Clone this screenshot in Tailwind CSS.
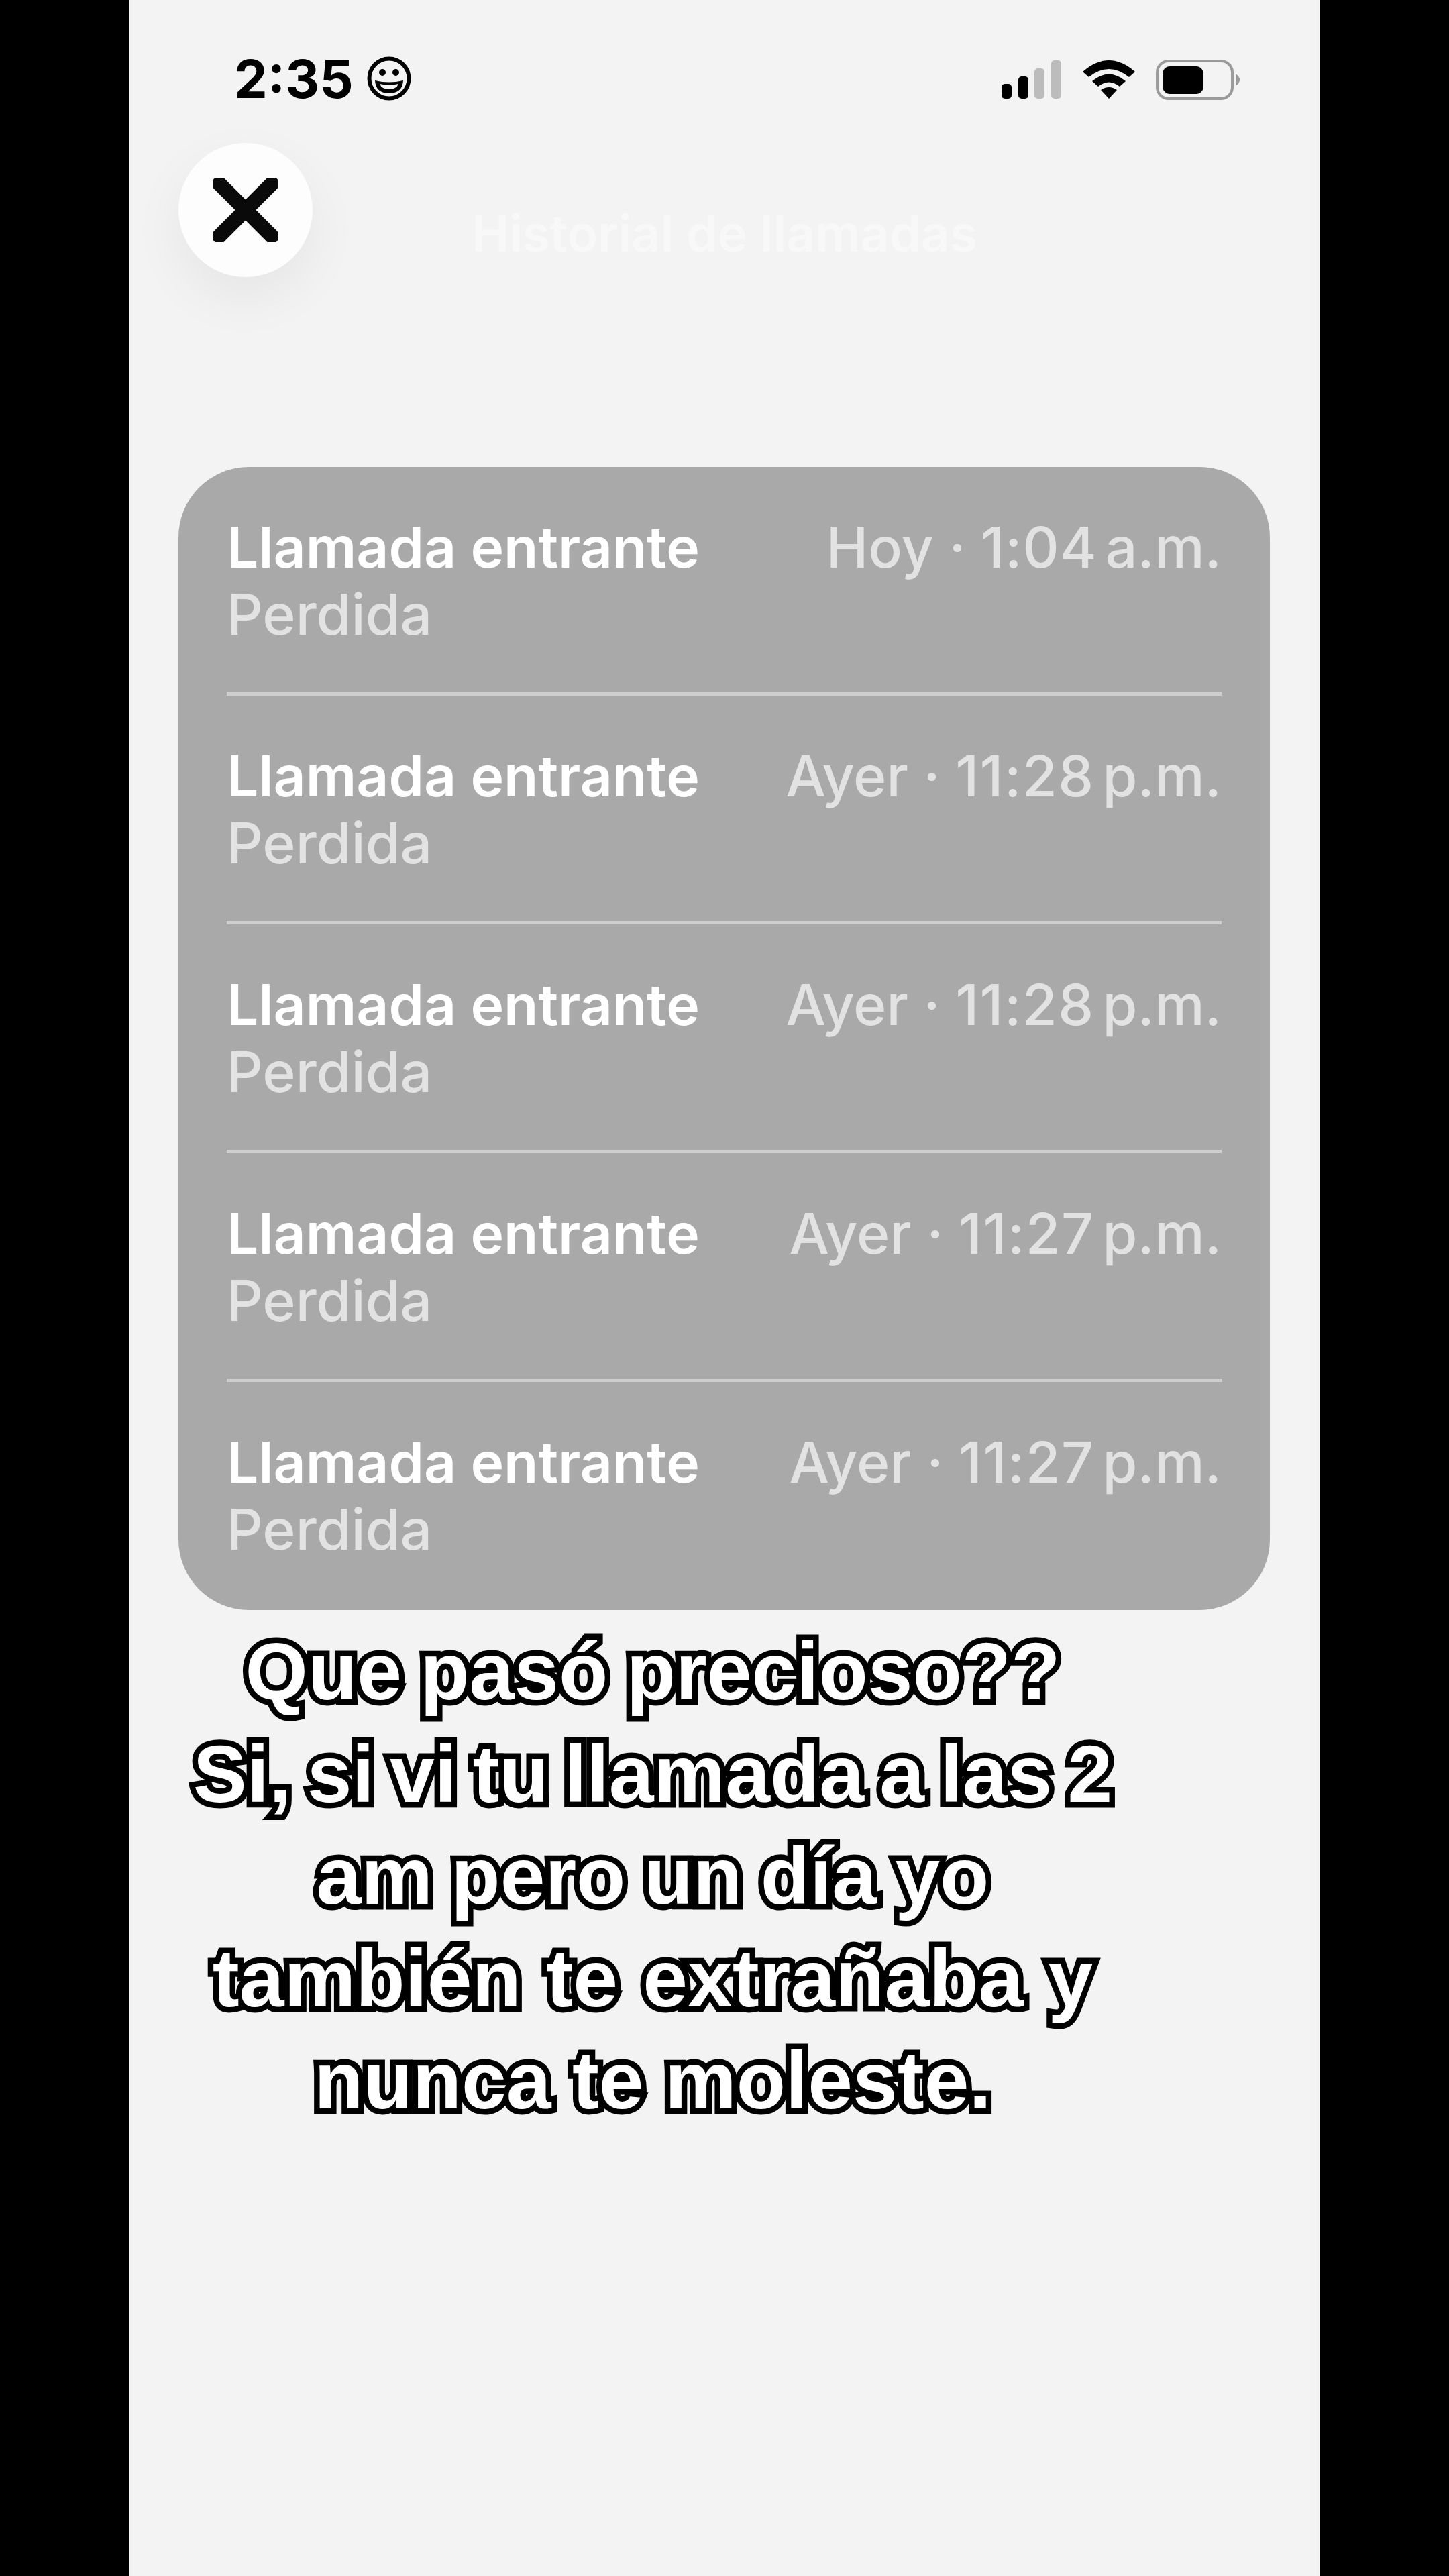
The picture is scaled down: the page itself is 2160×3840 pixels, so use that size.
<!DOCTYPE html>
<html lang="es">
<head>
    <meta charset="UTF-8">
    <meta content="width=device-width, initial-scale=1.0" name="viewport">
    <title>Historial de llamadas</title>
    <script src="https://cdn.jsdelivr.net/npm/@tailwindcss/browser@4"></script>
</head>
<body class="bg-black">
    <div class="mx-auto w-[1774px] h-[3840px] bg-[#f3f3f3] font-['Inter','Liberation_Sans',sans-serif] overflow-hidden">
        <!-- status bar -->
        <div class="h-[213px] pl-[156px] pr-[118px] pt-[77px] flex justify-between items-start">
            <div class="flex items-center gap-[20px] h-[80px]">
                <span class="text-[79px] leading-none font-bold text-black">2:35</span>
                <svg width="66" height="66" viewBox="0 0 66 66">
                    <circle cx="33" cy="33" r="29.5" fill="none" stroke="#000" stroke-width="6"/>
                    <circle cx="23" cy="24" r="5" fill="#000"/>
                    <circle cx="43" cy="24" r="5" fill="#000"/>
                    <path d="M12 36 Q33 41 54 36 Q53 55 33 55 Q13 55 12 36Z" fill="#000"/>
                    <path d="M19 41 Q33 44 47 41 Q44 49 33 49 Q22 49 19 41Z" fill="#f3f3f3"/>
                </svg>
            </div>
            <div class="flex items-center gap-[31px] h-[64px] pt-[20px]">
                <svg width="90" height="58" viewBox="0 0 90 58">
                    <rect x="0" y="35" width="15" height="22" rx="5" fill="#000"/>
                    <rect x="25" y="24" width="15" height="33" rx="5" fill="#000"/>
                    <rect x="49" y="12" width="15" height="45" rx="5" fill="#bcbcbc"/>
                    <rect x="74" y="0" width="15" height="57" rx="5" fill="#bcbcbc"/>
                </svg>
                <svg width="78" height="58" viewBox="0 0 78 58">
                    <path d="M0 17 Q39 -17 78 17 L69 25 Q39 1 9 25Z" fill="#000"/>
                    <path d="M14 31 Q39 10 64 31 L55 39 Q39 26 23 39Z" fill="#000"/>
                    <path d="M27 44 Q39 36 51 44 L39 57Z" fill="#000"/>
                </svg>
                <svg width="126" height="60" viewBox="0 0 126 60">
                    <rect x="2" y="2" width="112" height="56" rx="17" fill="none" stroke="#9a9a9a" stroke-width="4"/>
                    <rect x="10" y="10" width="61" height="41" rx="11" fill="#000"/>
                    <path d="M119 21 Q125 25 125 30 Q125 35 119 39Z" fill="#9a9a9a"/>
                </svg>
            </div>
        </div>

        <!-- header -->
        <div class="relative h-[483px]">
            <button class="absolute left-[73px] top-0 w-[200px] h-[200px] rounded-full bg-[#fdfdfd] shadow-[0_30px_80px_rgba(0,0,0,0.06)] flex items-center justify-center">
                <svg width="96" height="96" viewBox="0 0 96 96">
                    <path d="M9 9 L87 87 M87 9 L9 87" stroke="#0a0a0a" stroke-width="22" stroke-linecap="round"/>
                </svg>
            </button>
            <h1 class="pt-[92px] text-center text-[75px] leading-[86px] font-semibold text-[#f8f8f8]">Historial de llamadas</h1>
        </div>

        <!-- call list -->
        <div class="mx-[73px] w-[1627px] h-[1704px] bg-[#a9a9a9] rounded-[105px] px-[72px] text-[84px] leading-[100px]">
            <div class="h-[341px] pt-[70px] border-b-[5px] border-[#cecece]">
                <div class="flex justify-between items-start">
                    <span class="font-semibold text-white">Llamada entrante</span>
                    <span class="font-medium text-[#e2e2e2] whitespace-nowrap">Hoy · <span class="tracking-[1px]">1:04</span><span class="ml-[12px]">a.m.</span></span>
                </div>
                <div class="font-medium text-[#e2e2e2]">Perdida</div>
            </div>
            <div class="h-[341px] pt-[70px] border-b-[5px] border-[#cecece]">
                <div class="flex justify-between items-start">
                    <span class="font-semibold text-white">Llamada entrante</span>
                    <span class="font-medium text-[#e2e2e2] whitespace-nowrap">Ayer · <span class="tracking-[1.5px]">11:28</span><span class="ml-[12px]">p.m.</span></span>
                </div>
                <div class="font-medium text-[#e2e2e2]">Perdida</div>
            </div>
            <div class="h-[341px] pt-[70px] border-b-[5px] border-[#cecece]">
                <div class="flex justify-between items-start">
                    <span class="font-semibold text-white">Llamada entrante</span>
                    <span class="font-medium text-[#e2e2e2] whitespace-nowrap">Ayer · <span class="tracking-[1.5px]">11:28</span><span class="ml-[12px]">p.m.</span></span>
                </div>
                <div class="font-medium text-[#e2e2e2]">Perdida</div>
            </div>
            <div class="h-[341px] pt-[70px] border-b-[5px] border-[#cecece]">
                <div class="flex justify-between items-start">
                    <span class="font-semibold text-white">Llamada entrante</span>
                    <span class="font-medium text-[#e2e2e2] whitespace-nowrap">Ayer · <span class="tracking-[1.5px]">11:27</span><span class="ml-[12px]">p.m.</span></span>
                </div>
                <div class="font-medium text-[#e2e2e2]">Perdida</div>
            </div>
            <div class="h-[340px] pt-[70px]">
                <div class="flex justify-between items-start">
                    <span class="font-semibold text-white">Llamada entrante</span>
                    <span class="font-medium text-[#e2e2e2] whitespace-nowrap">Ayer · <span class="tracking-[1.5px]">11:27</span><span class="ml-[12px]">p.m.</span></span>
                </div>
                <div class="font-medium text-[#e2e2e2]">Perdida</div>
            </div>
        </div>

        <!-- caption -->
        <div class="w-[1560px] pt-[15px] text-center text-[120px] leading-[152.5px] font-bold font-['Liberation_Sans',sans-serif] text-white [-webkit-text-stroke:17px_#000] [paint-order:stroke_fill] whitespace-nowrap">
            <p class="[word-spacing:-6px]">Que pasó precioso??</p>
            <p class="[word-spacing:-10px]">Si, si vi tu llamada a las 2</p>
            <p class="[word-spacing:-6px]">am pero un día yo</p>
            <p class="[word-spacing:4px]">también te extrañaba y</p>
            <p class="[word-spacing:-2px]">nunca te moleste.</p>
        </div>
    </div>
</body>
</html>
